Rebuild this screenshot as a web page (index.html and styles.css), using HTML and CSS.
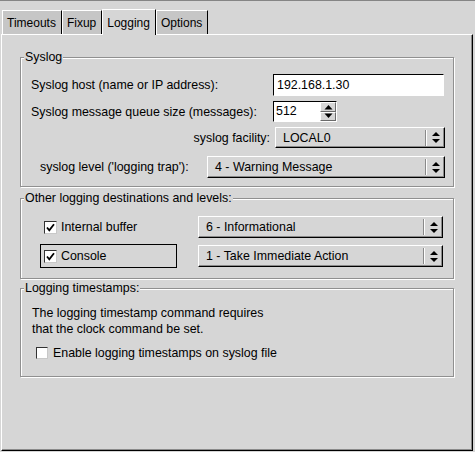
FILE: index.html
```html
<!DOCTYPE html>
<html>
<head>
<meta charset="utf-8">
<title>Logging</title>
<link rel="stylesheet" href="styles.css">
</head>
<body>
<div class="window">
  <div class="tabs">
    <div class="tab">Timeouts</div>
    <div class="tab">Fixup</div>
    <div class="tab active">Logging</div>
    <div class="tab">Options</div>
  </div>
  <div class="panel">
    <div class="group g1">
      <span class="title">Syslog</span>
      <div class="row r1">
        <span class="lbl wide">Syslog host (name or IP address):</span>
        <div class="field host">192.168.1.30</div>
      </div>
      <div class="row r2">
        <span class="lbl wide">Syslog message queue size (messages):</span>
        <div class="spin">
          <div class="spin-text">512</div>
          <div class="spin-btns">
            <div class="sb"><svg width="9" height="6" viewBox="0 0 9 6"><polygon points="0.5,5.5 4.5,1 8.5,5.5" fill="#000"/></svg></div>
            <div class="sb"><svg width="9" height="6" viewBox="0 0 9 6"><polygon points="0.5,0.5 4.5,5 8.5,0.5" fill="#000"/></svg></div>
          </div>
        </div>
      </div>
      <div class="row r3">
        <span class="lbl">syslog facility:</span>
        <div class="combo c-fac">
          <span class="ctext">LOCAL0</span>
          <span class="csep"></span>
          <svg class="carrow" width="8" height="13" viewBox="0 0 8 13"><polygon points="0,5 4,1 8,5" fill="#000"/><polygon points="0,8 4,12 8,8" fill="#000"/></svg>
        </div>
      </div>
      <div class="row r4">
        <span class="lbl">syslog level ('logging trap'):</span>
        <div class="combo c-lvl">
          <span class="ctext">4 - Warning Message</span>
          <span class="csep"></span>
          <svg class="carrow" width="8" height="13" viewBox="0 0 8 13"><polygon points="0,5 4,1 8,5" fill="#000"/><polygon points="0,8 4,12 8,8" fill="#000"/></svg>
        </div>
      </div>
    </div>

    <div class="group g2">
      <span class="title">Other logging destinations and levels:</span>
      <div class="dest-grid">
        <label class="chk-item">
          <span class="cb"><svg width="11" height="11" viewBox="0 0 11 11"><path d="M2 5.5 L4.3 8.3 L9 2.2" fill="none" stroke="#000" stroke-width="1.8"/></svg></span>
          <span>Internal buffer</span>
        </label>
        <div class="combo c-dest">
          <span class="ctext">6 - Informational</span>
          <span class="csep"></span>
          <svg class="carrow" width="8" height="13" viewBox="0 0 8 13"><polygon points="0,5 4,1 8,5" fill="#000"/><polygon points="0,8 4,12 8,8" fill="#000"/></svg>
        </div>
        <label class="chk-item focus">
          <span class="cb"><svg width="11" height="11" viewBox="0 0 11 11"><path d="M2 5.5 L4.3 8.3 L9 2.2" fill="none" stroke="#000" stroke-width="1.8"/></svg></span>
          <span>Console</span>
        </label>
        <div class="combo c-dest">
          <span class="ctext">1 - Take Immediate Action</span>
          <span class="csep"></span>
          <svg class="carrow" width="8" height="13" viewBox="0 0 8 13"><polygon points="0,5 4,1 8,5" fill="#000"/><polygon points="0,8 4,12 8,8" fill="#000"/></svg>
        </div>
      </div>
    </div>

    <div class="group g3">
      <span class="title">Logging timestamps:</span>
      <p class="note">The logging timestamp command requires<br>that the clock command be set.</p>
      <label class="chk-row">
        <span class="cb"></span>
        <span>Enable logging timestamps on syslog file</span>
      </label>
    </div>
  </div>
</div>
</body>
</html>
```

FILE: styles.css
```css
* { box-sizing: border-box; }

html, body {
  margin: 0;
  padding: 0;
  background: #d6d6d6;
}

body {
  font-family: "Liberation Sans", Arial, sans-serif;
  font-size: 12.4px;
  color: #000;
}

.window {
  width: 475px;
  height: 452px;
  border-top: 1px solid #858585;
  background: #d6d6d6;
  overflow: hidden;
}

/* Tabs */
.tabs {
  display: flex;
  align-items: flex-end;
  margin-top: 8px;
  padding-left: 2px;
  font-size: 12px;
}

.tab {
  height: 24px;
  padding: 2px 5px 0 4px;
  line-height: 21px;
  background: #c6c6c6;
  border-top: 1px solid #fff;
  border-left: 1px solid #fff;
  border-right: 1px solid #000;
  white-space: nowrap;
}

.tab.active {
  height: 26px;
  padding-top: 3px;
  margin-bottom: -1px;
  background: #d6d6d6;
  position: relative;
  z-index: 1;
}

/* Panel */
.panel {
  margin-left: 1px;
  width: 472px;
  height: 417px;
  border: 1px solid;
  border-color: #fff #000 #000 #fff;
  box-shadow: inset -1px -1px 0 #8a8a8a;
  padding-left: 18px;
}

/* Group boxes */
.group {
  position: relative;
  width: 434px;
  border: 1px solid #909090;
  box-shadow: inset 1px 1px 0 #fff, 1px 1px 0 #fff;
}

.title {
  position: absolute;
  top: -8px;
  left: 3px;
  padding: 0 1px;
  line-height: 14px;
  background: #d6d6d6;
  white-space: nowrap;
}

.g1 {
  margin-top: 22px;
  height: 130px;
  padding: 16px 8px 0 10px;
}

.g2 {
  margin-top: 11px;
  height: 81px;
  padding: 16px 9px 0 19px;
}

.g3 {
  margin-top: 9px;
  height: 89px;
  padding: 16px 0 0 11px;
}

/* Syslog rows */
.row {
  display: flex;
  align-items: center;
}

.lbl { white-space: nowrap; }
.lbl.wide { width: 242px; }

.r1 { height: 22px; }
.r2 { height: 21px; margin-top: 5px; }
.r3 { height: 21px; margin-top: 5px; justify-content: flex-end; gap: 5px; }
.r4 { height: 22px; margin-top: 8px; justify-content: space-between; padding-left: 9px; }

.field {
  background: #fff;
  border: 1px solid;
  border-color: #000 #fff #fff #000;
  padding-left: 3px;
  line-height: 19px;
  white-space: nowrap;
}

.host {
  width: 171px;
  height: 22px;
  line-height: 20px;
}

/* Spin box */
.spin {
  display: flex;
  width: 64px;
  height: 21px;
  border: 1px solid;
  border-color: #000 #fff #fff #000;
  background: #d6d6d6;
}

.spin-text {
  flex: 1;
  background: #fff;
  padding-left: 2px;
  line-height: 19px;
}

.spin-btns {
  width: 16px;
  display: flex;
  flex-direction: column;
}

.sb {
  flex: 1;
  display: flex;
  align-items: center;
  justify-content: center;
  border: 1px solid;
  border-color: #fff #6a6a6a #6a6a6a #fff;
  background: #d6d6d6;
}

/* Combo (option menu) */
.combo {
  display: flex;
  align-items: center;
  height: 22px;
  border: 1px solid;
  border-color: #fff #000 #000 #fff;
  box-shadow: inset -1px -1px 0 #8a8a8a;
  background: #d6d6d6;
  padding-left: 7px;
  white-space: nowrap;
}

.c-fac { width: 170px; height: 21px; }
.c-lvl { width: 238px; }
.c-dest { width: 245px; }

.ctext { flex: 1; }

.csep {
  width: 2px;
  height: 16px;
  border-left: 1px solid #8a8a8a;
  border-right: 1px solid #fff;
}

.carrow {
  display: block;
  margin: 0 4px 0 5px;
}

/* Other destinations */
.dest-grid {
  display: grid;
  grid-template-columns: 137px 245px;
  grid-auto-rows: 24px;
  column-gap: 21px;
  row-gap: 5px;
  align-items: center;
}

.chk-item {
  display: flex;
  align-items: center;
  gap: 4px;
  height: 24px;
  padding-left: 3px;
  border: 1px solid transparent;
}

.chk-item.focus { border-color: #000; }

.cb {
  display: flex;
  align-items: center;
  justify-content: center;
  width: 13px;
  height: 13px;
  flex: none;
  background: #fff;
  border: 1px solid;
  border-color: #333 #c8c8c8 #c8c8c8 #333;
}

/* Timestamps */
.note {
  margin: 0;
  line-height: 16px;
}

.chk-row {
  display: flex;
  align-items: center;
  gap: 5px;
  height: 16px;
  margin-top: 8px;
  padding-left: 4px;
}

.chk-row .cb { width: 12px; height: 12px; }
```
